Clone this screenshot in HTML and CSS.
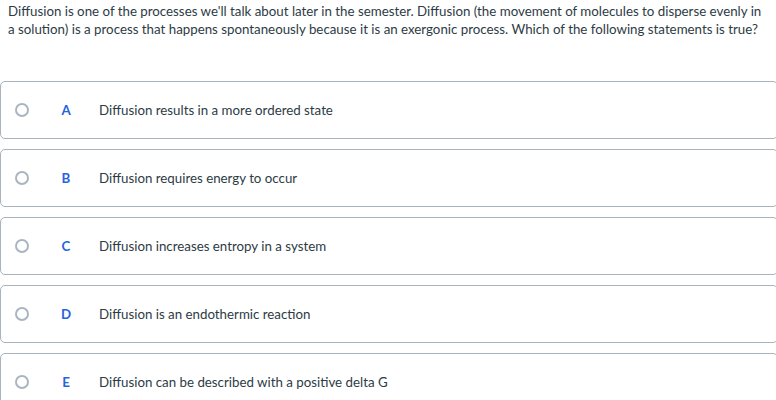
FILE: index.html
```html
<!DOCTYPE html>
<html>
<head>
<meta charset="utf-8">
<link rel="stylesheet" href="styles.css">
</head>
<body>
<div class="question">Diffusion is one of the processes we'll talk about later in the semester. Diffusion (the movement of molecules to disperse evenly in a solution) is a process that happens spontaneously because it is an exergonic process. Which of the following statements is true?</div>
<div class="options">
  <div class="option"><span class="radio"></span><span class="letter">A</span><span class="text">Diffusion results in a more ordered state</span></div>
  <div class="option"><span class="radio"></span><span class="letter">B</span><span class="text">Diffusion requires energy to occur</span></div>
  <div class="option"><span class="radio"></span><span class="letter">C</span><span class="text">Diffusion increases entropy in a system</span></div>
  <div class="option"><span class="radio"></span><span class="letter">D</span><span class="text">Diffusion is an endothermic reaction</span></div>
  <div class="option"><span class="radio"></span><span class="letter">E</span><span class="text">Diffusion can be described with a positive delta G</span></div>
</div>
</body>
</html>
```
FILE: styles.css
```css
html, body {
  margin: 0;
  padding: 0;
  background: #fff;
}
body {
  font-family: "Lato", "Noto Sans", sans-serif;
  color: #2d3b45;
  overflow: hidden;
}
.question {
  padding: 2px 8px 0 8px;
  font-size: 13.3px;
  line-height: 18px;
}
.options {
  margin-top: 43px;
  display: flex;
  flex-direction: column;
  gap: 10px;
  width: 778px;
}
.option {
  height: 58px;
  box-sizing: border-box;
  border: 1px solid #a9b3bc;
  border-radius: 5px;
  display: flex;
  align-items: center;
  font-size: 13.3px;
}
.radio {
  width: 10px;
  height: 10px;
  border: 2px solid #a9b5c1;
  border-radius: 50%;
  margin-left: 14px;
  flex: none;
}
.letter {
  width: 14px;
  margin-left: 30px;
  text-align: center;
  font-weight: 700;
  color: #2563e0;
}
.text {
  margin-left: 26px;
}
```
